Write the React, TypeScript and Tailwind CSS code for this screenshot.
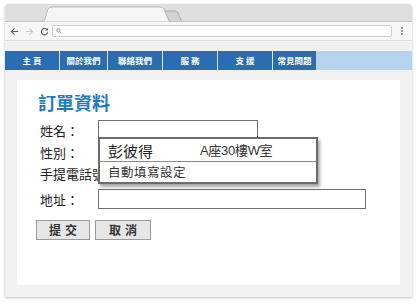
import React from 'react'

const cjk = { fontFamily: '"Noto Sans CJK TC", "Noto Sans CJK SC", sans-serif' }
const mixed = { fontFamily: '"Liberation Sans", "Noto Sans CJK TC", sans-serif' }

const navItems = [
  { label: '主 頁', w: 'w-[55px]' },
  { label: '關於我們', w: 'w-[48px]' },
  { label: '聯絡我們', w: 'w-[55px]' },
  { label: '服 務', w: 'w-[55px]' },
  { label: '支 援', w: 'w-[55px]' },
  { label: '常見問題', w: 'w-[43px]' },
]

function TabStrip() {
  return (
    <div className="h-[18px] bg-[#dedede] rounded-t-[4px] overflow-hidden">
      <svg width="407" height="18" viewBox="0 0 407 18">
        <path d="M159 7 L170 7 Q172 7 173 9 L177 18 L165 18 Z" fill="#d2d2d2" stroke="#a9a9a9" strokeWidth="1" />
        <path d="M36 18 Q39 18 40 15 L43 5 Q44 3 47 3 L155 3 Q158 3 159 5 L163 15 Q164 18 167 18 Z" fill="#f6f6f6" stroke="#b9b9b9" strokeWidth="1" />
        <line x1="0" y1="17.5" x2="36" y2="17.5" stroke="#c4c4c4" />
        <line x1="167" y1="17.5" x2="407" y2="17.5" stroke="#c4c4c4" />
      </svg>
    </div>
  )
}

function Toolbar() {
  return (
    <div className="h-[19px] bg-[#f6f6f6] border-b border-[#dcdcdc] flex items-center">
      <div className="w-[47px] flex items-center pl-[5px] gap-[6px]">
        <svg width="9" height="9" viewBox="0 0 10 10">
          <path d="M9 5 H1.5 M5 1.5 L1.5 5 L5 8.5" stroke="#5f5f5f" strokeWidth="1.2" fill="none" />
        </svg>
        <svg width="9" height="9" viewBox="0 0 10 10">
          <path d="M1 5 H8.5 M5 1.5 L8.5 5 L5 8.5" stroke="#c8c8c8" strokeWidth="1.2" fill="none" />
        </svg>
        <svg width="9" height="9" viewBox="0 0 10 10">
          <path d="M8.3 3.5 A3.6 3.6 0 1 0 8.6 6" stroke="#5f5f5f" strokeWidth="1.2" fill="none" />
          <path d="M8.8 1 V4 H5.8" fill="#5f5f5f" />
        </svg>
      </div>
      <div className="w-[340px] h-[12px] bg-white border border-[#cfcfcf] rounded-[2px] flex items-center pl-[3px]">
        <svg width="6" height="6" viewBox="0 0 8 8">
          <circle cx="3.2" cy="3.2" r="2.3" stroke="#777" strokeWidth="1" fill="none" />
          <path d="M5 5 L7.5 7.5" stroke="#777" strokeWidth="1" />
        </svg>
      </div>
      <div className="flex-1 flex justify-center">
        <div className="flex flex-col gap-[1px]">
          <span className="w-[2px] h-[2px] rounded-full bg-[#7a7a7a]" />
          <span className="w-[2px] h-[2px] rounded-full bg-[#7a7a7a]" />
          <span className="w-[2px] h-[2px] rounded-full bg-[#7a7a7a]" />
        </div>
      </div>
    </div>
  )
}

function Nav() {
  return (
    <div className="h-[19px] flex bg-[#b6d3ee]" style={cjk}>
      {navItems.map((item, i) => (
        <div
          key={item.label}
          className={`${item.w} h-full bg-[#2a6db1] flex items-center justify-center text-white text-[8.5px] font-bold ${i < navItems.length - 1 ? 'border-r border-[#dbe7f3]' : ''}`}
        >
          {item.label}
        </div>
      ))}
    </div>
  )
}

function Row({ label, h, children }: { label: string; h: string; children?: React.ReactNode }) {
  return (
    <div className={`flex items-center ${h}`}>
      <div className="w-[58px] pl-[23px] box-content text-[13px] text-[#222] whitespace-nowrap leading-none">{label}</div>
      {children}
    </div>
  )
}

export default function App() {
  return (
    <div className="w-[418px] h-[304px] bg-white pt-[4px] pl-[5px] overflow-hidden">
      <div className="w-[407px] h-[293px] rounded-t-[4px] shadow-[0_1px_3px_rgba(0,0,0,0.25)] flex flex-col">
        <TabStrip />
        <Toolbar />
        <div className="flex-1 bg-[#f1f1f1] pt-[10px] flex flex-col">
          <Nav />
          <div className="relative mx-[12px] mt-[10px] h-[205px] bg-white" style={cjk}>
            <h1 className="pl-[21px] pt-[11px] text-[18px] leading-[22px] font-bold text-[#1f7bc1]">訂單資料</h1>
            <div className="mt-[7px]">
              <Row label="姓名：" h="h-[20px]">
                <div className="w-[160px] h-[20px] border border-[#6f6f6f]" />
              </Row>
              <Row label="性別：" h="h-[22px] mt-[1px]" />
              {/* phone label runs under the autofill popup, as in the screenshot */}
              <Row label="手提電話號碼：" h="h-[20px]" />
              <Row label="地址：" h="h-[20px] mt-[6px]">
                <div className="w-[268px] h-[20px] border border-[#6f6f6f]" />
              </Row>
            </div>
            <div className="flex gap-[5px] pl-[19px] mt-[11px]">
              <button className="w-[54px] h-[20px] bg-[#e6e6e6] border border-[#9a9a9a] text-[12px] font-bold text-[#333] tracking-[4px] leading-none pl-[4px]">提交</button>
              <button className="w-[56px] h-[20px] bg-[#e6e6e6] border border-[#9a9a9a] text-[12px] font-bold text-[#333] tracking-[4px] leading-none pl-[4px]">取消</button>
            </div>
            <div className="absolute left-[81px] top-[57px] w-[220px] bg-white border-2 border-[#6b6b6b] shadow-[2px_3px_3px_rgba(0,0,0,0.35)]">
              <div className="h-[23px] flex items-center pl-[8px] border-b border-[#8a8a8a]">
                <span className="w-[92px] text-[15px] text-[#222] leading-none">彭彼得</span>
                <span className="text-[13px] text-[#333] leading-none tracking-[-0.3px]" style={mixed}>A座30樓W室</span>
              </div>
              <div className="h-[20px] flex items-center pl-[8px] text-[12.5px] text-[#333] leading-none tracking-[0.5px]">自動填寫設定</div>
            </div>
          </div>
        </div>
      </div>
    </div>
  )
}
